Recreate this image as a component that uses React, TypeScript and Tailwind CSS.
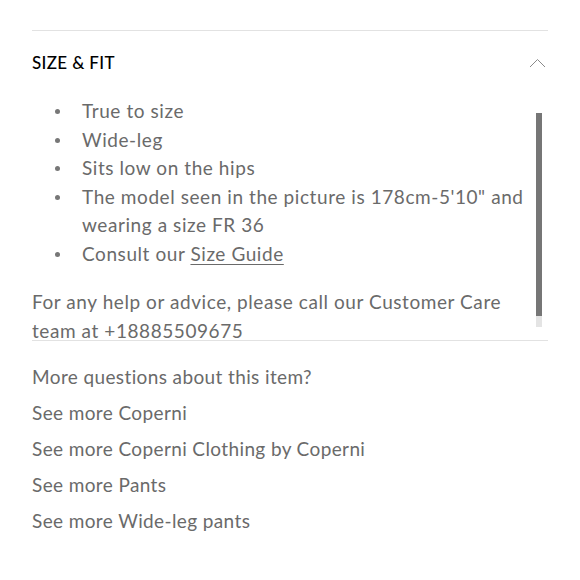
import React from "react";

const bullets = [
  "True to size",
  "Wide-leg",
  "Sits low on the hips",
  "The model seen in the picture is 178cm-5'10\" and wearing a size FR 36",
];

const links = [
  "More questions about this item?",
  "See more Coperni",
  "See more Coperni Clothing by Coperni",
  "See more Pants",
  "See more Wide-leg pants",
];

export default function App() {
  return (
    <div
      className="w-[580px] h-[580px] bg-white px-8 pt-[30px]"
      style={{ fontFamily: "Lato, 'Open Sans', sans-serif" }}
    >
      <div className="border-t border-[#e2e2e2]">
        {/* Accordion header */}
        <div className="flex items-center justify-between h-[63px]">
          <span className="text-[17px] font-medium tracking-[0.02em] text-black uppercase">Size &amp; Fit</span>
          <svg width="17" height="10" viewBox="0 0 17 10" className="mr-[2px]">
            <path d="M1 9 L8.5 1.5 L16 9" fill="none" stroke="#8a8a8a" strokeWidth="1" />
          </svg>
        </div>

        {/* Scrolling body */}
        <div className="relative h-[247px] overflow-hidden border-b border-[#e2e2e2] text-[19px] leading-[28.5px] tracking-[0.03em] text-[#6a6a6a]">
          <ul className="pt-[3px] pl-[50px] pr-[6px]">
            {bullets.map((b) => (
              <li key={b} className="relative">
                <span className="absolute left-[-27px] top-[12px] w-[5px] h-[5px] rounded-full bg-[#777777]" />
                {b}
              </li>
            ))}
            <li className="relative">
              <span className="absolute left-[-27px] top-[12px] w-[5px] h-[5px] rounded-full bg-[#777777]" />
              Consult our <span className="underline underline-offset-[3px]">Size Guide</span>
            </li>
          </ul>
          <p className="mt-[20px] pr-[36px]">
            For any help or advice, please call our Customer Care team at +18885509675
          </p>

          {/* scrollbar */}
          <div className="absolute right-[6px] top-[19px] w-[6px] h-[214px] bg-[#e4e4e4]">
            <div className="w-full h-[203px] bg-[#767676]" />
          </div>
        </div>

        {/* Links */}
        <div className="pt-[18px] text-[19px] leading-[36px] tracking-[0.02em] text-[#6a6a6a]">
          {links.map((l) => (
            <div key={l}>{l}</div>
          ))}
        </div>
      </div>
    </div>
  );
}
